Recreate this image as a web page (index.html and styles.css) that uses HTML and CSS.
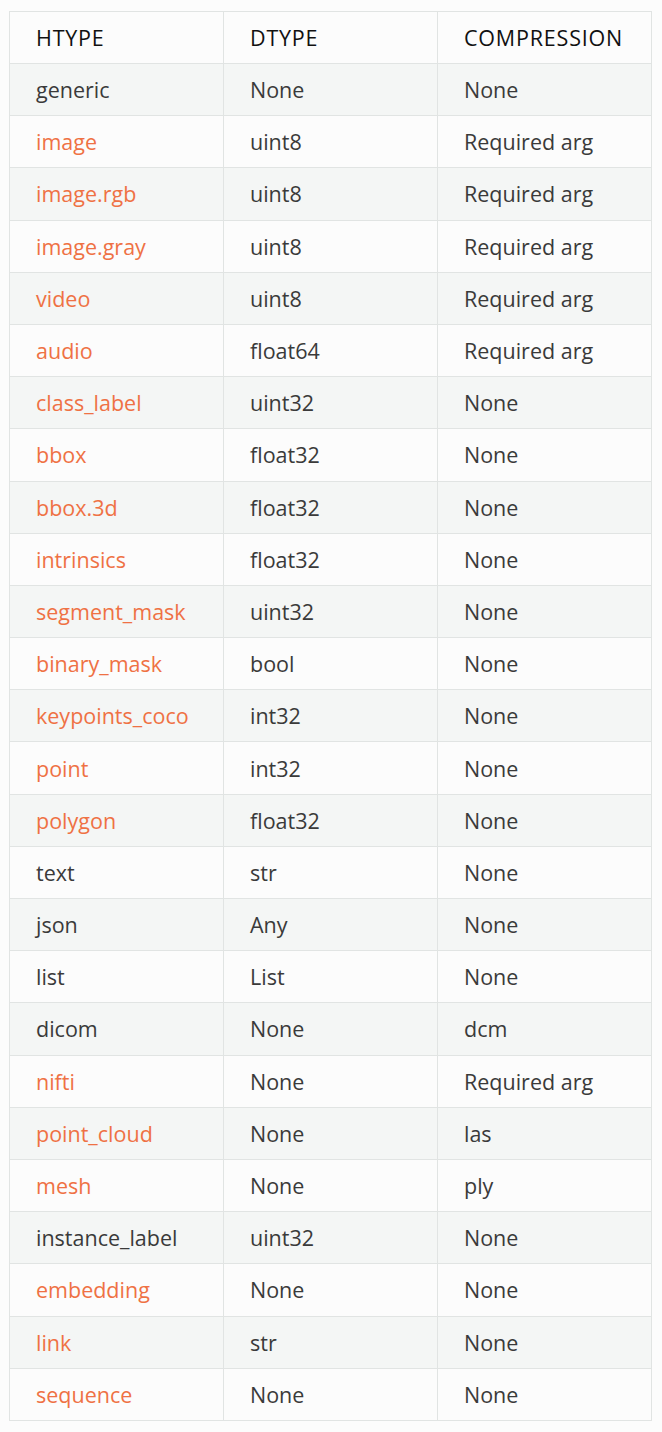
FILE: index.html
```html
<!DOCTYPE html>
<html>
<head>
<meta charset="utf-8">
<link rel="stylesheet" href="styles.css">
</head>
<body>
<table class="htypes">
<colgroup><col class="c"><col class="c"><col class="c"></colgroup>
<thead>
<tr><th>HTYPE</th><th>DTYPE</th><th>COMPRESSION</th></tr>
</thead>
<tbody>
<tr><td>generic</td><td>None</td><td>None</td></tr>
<tr><td><span class="link">image</span></td><td>uint8</td><td>Required arg</td></tr>
<tr><td><span class="link">image.rgb</span></td><td>uint8</td><td>Required arg</td></tr>
<tr><td><span class="link">image.gray</span></td><td>uint8</td><td>Required arg</td></tr>
<tr><td><span class="link">video</span></td><td>uint8</td><td>Required arg</td></tr>
<tr><td><span class="link">audio</span></td><td>float64</td><td>Required arg</td></tr>
<tr><td><span class="link">class_label</span></td><td>uint32</td><td>None</td></tr>
<tr><td><span class="link">bbox</span></td><td>float32</td><td>None</td></tr>
<tr><td><span class="link">bbox.3d</span></td><td>float32</td><td>None</td></tr>
<tr><td><span class="link">intrinsics</span></td><td>float32</td><td>None</td></tr>
<tr><td><span class="link">segment_mask</span></td><td>uint32</td><td>None</td></tr>
<tr><td><span class="link">binary_mask</span></td><td>bool</td><td>None</td></tr>
<tr><td><span class="link">keypoints_coco</span></td><td>int32</td><td>None</td></tr>
<tr><td><span class="link">point</span></td><td>int32</td><td>None</td></tr>
<tr><td><span class="link">polygon</span></td><td>float32</td><td>None</td></tr>
<tr><td>text</td><td>str</td><td>None</td></tr>
<tr><td>json</td><td>Any</td><td>None</td></tr>
<tr><td>list</td><td>List</td><td>None</td></tr>
<tr><td>dicom</td><td>None</td><td>dcm</td></tr>
<tr><td><span class="link">nifti</span></td><td>None</td><td>Required arg</td></tr>
<tr><td><span class="link">point_cloud</span></td><td>None</td><td>las</td></tr>
<tr><td><span class="link">mesh</span></td><td>None</td><td>ply</td></tr>
<tr><td>instance_label</td><td>uint32</td><td>None</td></tr>
<tr><td><span class="link">embedding</span></td><td>None</td><td>None</td></tr>
<tr><td><span class="link">link</span></td><td>str</td><td>None</td></tr>
<tr><td><span class="link">sequence</span></td><td>None</td><td>None</td></tr>
</tbody>
</table>
</body>
</html>
```
FILE: styles.css
```css
html, body {
  margin: 0;
  background: #fcfcfc;
}
body {
  padding: 11px 0 0 9px;
  font-family: "Open Sans", "Noto Sans", sans-serif;
  font-size: 21.5px;
  color: #3a3a3a;
}
.htypes {
  border-collapse: collapse;
  table-layout: fixed;
  width: 643px;
}
.htypes .c {
  width: 214px;
}
.htypes th,
.htypes td {
  border: 1px solid #e1e4e3;
  height: 52.2px;
  padding: 0 0 0 26px;
  text-align: left;
  vertical-align: middle;
  box-sizing: border-box;
}
.htypes th {
  height: 52px;
  font-weight: 400;
  color: #111;
  letter-spacing: 0.8px;
}
.htypes tbody tr:nth-child(odd) {
  background: #f4f6f5;
}
.link {
  color: #ef7144;
}
```
